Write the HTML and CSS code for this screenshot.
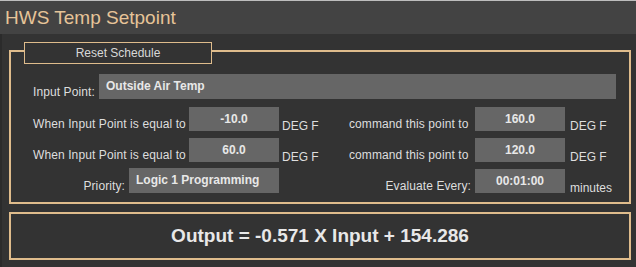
FILE: index.html
```html
<!DOCTYPE html>
<html lang="en">

<head>
    <meta charset="UTF-8">
    <title>HWS Temp Setpoint</title>
    <link rel="stylesheet" href="styles.css">
</head>

<body>
    <div class="header">HWS Temp Setpoint</div>

    <div class="schedule">
        <div class="legend">Reset Schedule</div>

        <div class="row row-input">
            <span class="label label-input">Input Point:</span>
            <span class="box box-wide">Outside Air Temp</span>
        </div>

        <div class="row row-first">
            <span class="label label-when">When Input Point is equal to</span>
            <span class="box box-num">-10.0</span>
            <span class="unit unit-left">DEG F</span>
            <span class="label label-cmd">command this point to</span>
            <span class="box box-num">160.0</span>
            <span class="unit">DEG F</span>
        </div>

        <div class="row row-second">
            <span class="label label-when">When Input Point is equal to</span>
            <span class="box box-num">60.0</span>
            <span class="unit unit-left">DEG F</span>
            <span class="label label-cmd">command this point to</span>
            <span class="box box-num">120.0</span>
            <span class="unit">DEG F</span>
        </div>

        <div class="row row-last">
            <span class="label label-priority">Priority:</span>
            <span class="box box-text">Logic 1 Programming</span>
            <span class="label label-eval">Evaluate Every:</span>
            <span class="box box-num">00:01:00</span>
            <span class="unit">minutes</span>
        </div>
    </div>

    <div class="output">Output = -0.571 X Input + 154.286</div>
</body>

</html>
```

FILE: styles.css
```css
html,
body {
    margin: 0;
    padding: 0;
}

body {
    width: 636px;
    height: 267px;
    overflow: hidden;
    background: linear-gradient(to right, #2b2b2b 2px, #333333 2px);
    font-family: "Liberation Sans", Arial, sans-serif;
    font-size: 12px;
    color: #dedede;
}

.header {
    height: 33px;
    border-top: 1px solid #bdbdbd;
    background: #434343;
    color: #e6c498;
    font-size: 19px;
    line-height: 33px;
    padding-left: 5px;
}

/* 分组框 */
.schedule {
    position: relative;
    margin: 16px 5px 0 9px;
    border: 2px solid #dfbc8c;
    padding: 22px 0 9px 22px;
}

.legend {
    position: absolute;
    top: -10px;
    left: 13px;
    width: 186px;
    height: 20px;
    border: 1px solid #dfbc8c;
    background: #333333;
    text-align: center;
    line-height: 20px;
    color: #d8d8d8;
}

.row {
    display: flex;
    align-items: flex-end;
}

.row-first {
    margin-top: 8px;
}

.row-second {
    margin-top: 7px;
}

.row-last {
    margin-top: 6px;
}

.label {
    line-height: 12px;
    margin-bottom: 1px;
    white-space: nowrap;
    letter-spacing: 0.1px;
}

.label-input {
    width: 66px;
}

.label-when {
    width: 156px;
}

.label-cmd {
    width: 126px;
}

.label-priority {
    width: 92px;
    padding-right: 4px;
    text-align: right;
}

.label-eval {
    width: 192px;
    padding-right: 4px;
    text-align: right;
}

.box {
    height: 24px;
    line-height: 24px;
    background: #666666;
    color: #e8e8e8;
    font-weight: bold;
    white-space: nowrap;
}

.box-wide {
    width: 510px;
    height: 25px;
    line-height: 25px;
    padding-left: 7px;
}

.box-text {
    width: 143px;
    height: 25px;
    line-height: 25px;
    padding-left: 7px;
}

.box-num {
    width: 90px;
    text-align: center;
}

.unit {
    line-height: 12px;
    margin-bottom: -1px;
    padding-left: 5px;
}

.unit-left {
    width: 67px;
    padding-left: 3px;
}

.output {
    margin: 8px 5px 0 9px;
    height: 44px;
    border: 2px solid #dfbc8c;
    text-align: center;
    line-height: 44px;
    font-size: 19px;
    font-weight: bold;
    color: #e8e8e8;
}
```
